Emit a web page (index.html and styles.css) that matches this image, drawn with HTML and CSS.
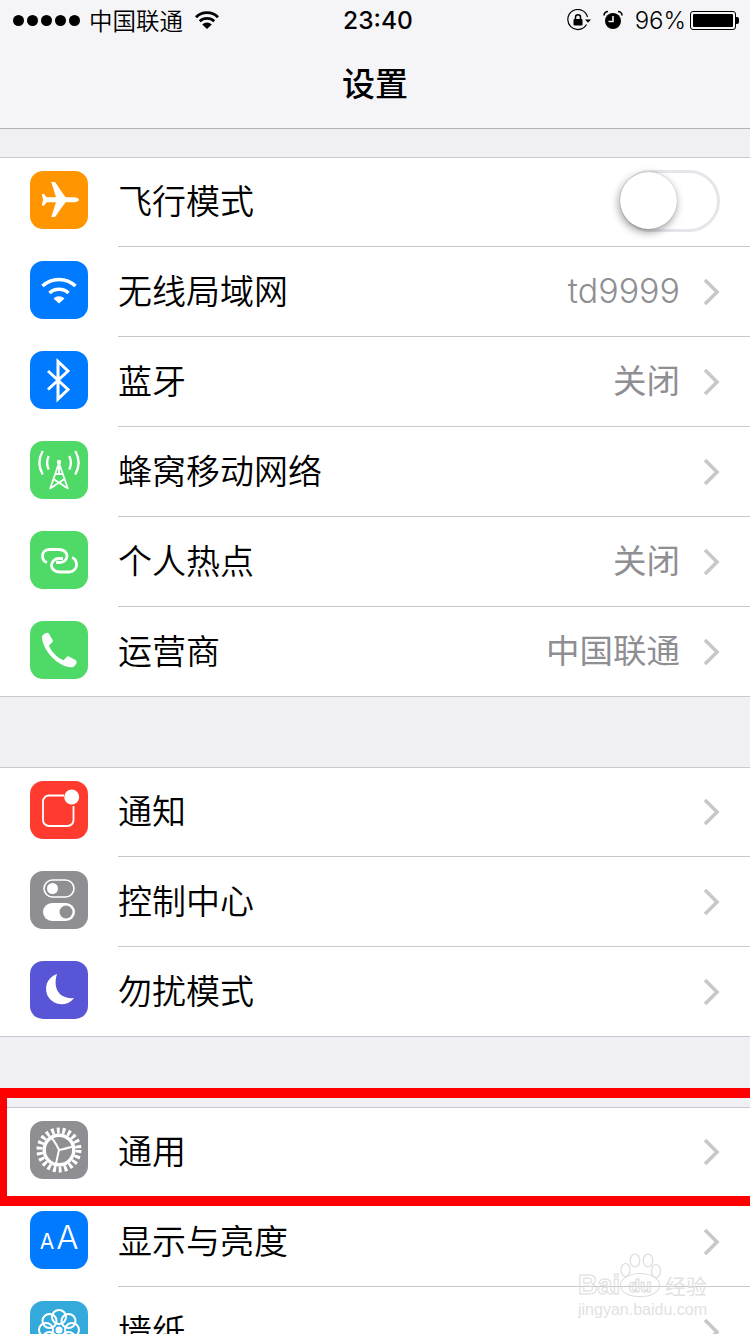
FILE: index.html
```html
<!DOCTYPE html>
<html lang="zh-CN">
<head>
    <meta charset="UTF-8">
    <meta name="viewport" content="width=device-width, initial-scale=1.0">
    <title>设置</title>
    <link rel="stylesheet" href="styles.css">
</head>
<body>
<div class="page">
    <!-- Status bar + title -->
    <header class="topbar">
        <div class="status">
            <div class="status-left">
                <div class="signal"><i></i><i></i><i></i><i></i><i></i></div>
                <span class="carrier">中国联通</span>
                <svg class="st-wifi" width="24" height="18" viewBox="0 0 24 18">
                    <path d="M1 6.200a15.500 15.500 0 0 1 22 0" fill="none" stroke="#000" stroke-width="2.800"/>
                    <path d="M4.800 10.200a10.500 10.500 0 0 1 14.400 0" fill="none" stroke="#000" stroke-width="2.800"/>
                    <path d="M12 18l-4.800-4.600a7 7 0 0 1 9.600 0z"/>
                </svg>
            </div>
            <div class="time">23:40</div>
            <div class="status-right">
                <svg class="st-lock" width="24" height="22" viewBox="0 0 24 22">
                    <path d="M20.500 8A10 10 0 1 0 19.500 15.500" fill="none" stroke="#000" stroke-width="1.200"/>
                    <path d="M18 10.500h6l-3 3.200z"/>
                    <rect x="6.500" y="10" width="9" height="6.500" rx="1"/>
                    <path d="M8.500 10V8.200a2.500 2.500 0 0 1 5 0V10" fill="none" stroke="#000" stroke-width="1.500"/>
                </svg>
                <svg class="st-alarm" width="20" height="20" viewBox="0 0 20 20">
                    <circle cx="10" cy="11" r="8"/>
                    <path d="M10 6v5.500H5.500" fill="none" stroke="#f5f5f7" stroke-width="1.600"/>
                    <path d="M1 5.500A4 4 0 0 1 5 1.500M19 5.500A4 4 0 0 0 15 1.500" fill="none" stroke="#000" stroke-width="1.600"/>
                </svg>
                <span class="battery-pct">96%</span>
                <div class="battery"><div class="battery-fill"></div></div>
                <div class="battery-tip"></div>
            </div>
        </div>
        <h1 class="title">设置</h1>
    </header>

    <!-- Group 1 -->
    <section class="group group-first">
        <div class="row">
            <div class="icon orange">
                <svg width="58" height="58" viewBox="0 0 58 58"><path fill="#fff" d="M49 28.700c0 1.500-2.500 2.500-5 2.500h-8.500L25 46h-3.700l4.700-14.800h-9.300l-3 3.600-1.900-.5 1.300-5.600-1.300-5.500 1.900-.5 3 3.600H26L21.300 11H25l10.500 15.200H44c2.500 0 5 1 5 2.500z"/></svg>
            </div>
            <span class="label">飞行模式</span>
            <div class="switch"><div class="knob"></div></div>
        </div>
        <div class="row">
            <div class="icon blue">
                <svg width="58" height="58" viewBox="0 0 58 58" fill="none" stroke="#fff" stroke-width="3.600">
                    <path d="M12.500 25a24 24 0 0 1 33 0"/>
                    <path d="M19.500 32a14 14 0 0 1 19 0"/>
                    <path fill="#fff" stroke="none" d="M29 42.500l-5.500-5a8 8 0 0 1 11 0z"/>
                </svg>
            </div>
            <span class="label">无线局域网</span>
            <span class="value value-latin">td9999</span>
            <svg class="chev" width="18" height="28" viewBox="0 0 18 28"><path d="M3 2l12 12L3 26" fill="none" stroke="#c7c7cc" stroke-width="3.600"/></svg>
        </div>
        <div class="row">
            <div class="icon blue">
                <svg width="58" height="58" viewBox="0 0 58 58"><path d="M18 20l20 18.500L28 48V10.500l10 9.500-20 18.500" fill="none" stroke="#fff" stroke-width="3"/></svg>
            </div>
            <span class="label">蓝牙</span>
            <span class="value">关闭</span>
            <svg class="chev" width="18" height="28" viewBox="0 0 18 28"><path d="M3 2l12 12L3 26" fill="none" stroke="#c7c7cc" stroke-width="3.600"/></svg>
        </div>
        <div class="row">
            <div class="icon green">
                <svg width="58" height="58" viewBox="0 0 58 58" fill="none" stroke="#fff" stroke-width="1.800">
                    <path d="M12.700 10a24 24 0 0 0 0 23.500M45.300 10a24 24 0 0 1 0 23.500" stroke-width="2.400"/>
                    <path d="M18.700 15a16 16 0 0 0 0 13.500M39.300 15a16 16 0 0 1 0 13.500" stroke-width="2.400"/>
                    <circle cx="29" cy="21" r="2.200" fill="#fff" stroke="none"/>
                    <path d="M29 22L20 48M29 22l9 26M29 22v11M25.500 33h7M23.500 38l13.500 9M34.500 38L21 47"/>
                </svg>
            </div>
            <span class="label">蜂窝移动网络</span>
            <svg class="chev" width="18" height="28" viewBox="0 0 18 28"><path d="M3 2l12 12L3 26" fill="none" stroke="#c7c7cc" stroke-width="3.600"/></svg>
        </div>
        <div class="row">
            <div class="icon green">
                <svg width="58" height="58" viewBox="0 0 58 58" fill="none" stroke="#fff" stroke-width="2.800">
                    <path d="M17 31.500C14 30.500 12.500 28 12.500 25 12.500 21 15.500 18.500 19.500 18.500H29C33.500 18.500 37 21.500 37 25 37 29 33.500 31.500 30 31.500H26"/>
                    <path d="M42 26.500C45 27.500 46.500 30.500 46.500 34 46.500 38 43 41 39 41H30C25 41 21.500 38 21.500 34.500 21.500 30.500 25 27.500 29 27.500H33"/>
                </svg>
            </div>
            <span class="label">个人热点</span>
            <span class="value">关闭</span>
            <svg class="chev" width="18" height="28" viewBox="0 0 18 28"><path d="M3 2l12 12L3 26" fill="none" stroke="#c7c7cc" stroke-width="3.600"/></svg>
        </div>
        <div class="row">
            <div class="icon green">
                <svg width="58" height="58" viewBox="0 0 58 58"><path fill="#fff" d="M12 16c0-1.500 3-4 5-4.200 1 0 1.600.5 2.200 1.400l3.300 5.600c.6 1.200.3 2.200-.6 3l-2.200 2c-.6.600-.7 1-.3 1.900 2.600 5.300 7.600 10.500 13 13 .9.400 1.400.3 2-.3l2-2.200c.9-.9 1.900-1.100 3-.5l6 3.400c.9.600 1.300 1.400 1.200 2.300-.3 2-2.700 4.600-4.500 4.800C30 47 12.500 30.500 12 16z"/></svg>
            </div>
            <span class="label">运营商</span>
            <span class="value">中国联通</span>
            <svg class="chev" width="18" height="28" viewBox="0 0 18 28"><path d="M3 2l12 12L3 26" fill="none" stroke="#c7c7cc" stroke-width="3.600"/></svg>
        </div>
    </section>

    <!-- Group 2 -->
    <section class="group">
        <div class="row">
            <div class="icon red">
                <svg width="58" height="58" viewBox="0 0 58 58">
                    <path d="M34 14.500H19a6 6 0 0 0-6 6V39a6 6 0 0 0 6 6h18.500a6 6 0 0 0 6-6V25" fill="none" stroke="#fff" stroke-width="1.800"/>
                    <circle cx="41.700" cy="16" r="7.500" fill="#fff"/>
                </svg>
            </div>
            <span class="label">通知</span>
            <svg class="chev" width="18" height="28" viewBox="0 0 18 28"><path d="M3 2l12 12L3 26" fill="none" stroke="#c7c7cc" stroke-width="3.600"/></svg>
        </div>
        <div class="row">
            <div class="icon gray">
                <svg width="58" height="58" viewBox="0 0 58 58">
                    <rect x="14" y="9" width="30" height="17" rx="8.500" fill="none" stroke="#fff" stroke-width="1.600"/>
                    <circle cx="22.500" cy="17.500" r="5.500" fill="#fff"/>
                    <rect x="13" y="32" width="32" height="18" rx="9" fill="#fff"/>
                    <circle cx="36" cy="41" r="6.500" fill="#8e8e93"/>
                </svg>
            </div>
            <span class="label">控制中心</span>
            <svg class="chev" width="18" height="28" viewBox="0 0 18 28"><path d="M3 2l12 12L3 26" fill="none" stroke="#c7c7cc" stroke-width="3.600"/></svg>
        </div>
        <div class="row">
            <div class="icon purple">
                <svg width="58" height="58" viewBox="0 0 58 58"><path fill="#fff" d="M27 13C24 22 26 30 31 34 34.500 36.500 39 37.500 44 37A15.500 15.500 0 1 1 27 13z"/></svg>
            </div>
            <span class="label">勿扰模式</span>
            <svg class="chev" width="18" height="28" viewBox="0 0 18 28"><path d="M3 2l12 12L3 26" fill="none" stroke="#c7c7cc" stroke-width="3.600"/></svg>
        </div>
    </section>

    <!-- Group 3 -->
    <section class="group">
        <div class="row">
            <div class="icon gray">
                <svg width="58" height="58" viewBox="0 0 58 58" fill="none" stroke="#fff">
                    <circle cx="29" cy="29" r="19.500" stroke-width="6" stroke-dasharray="2.900 2.670"/>
                    <circle cx="29" cy="29" r="14.800" stroke-width="3.400"/>
                    <path d="M29 29C27 25 25 20 21 16.500M29 29C33 28 39 27 44 25M29 29C28 33 27 38 26 43" stroke-width="2"/>
                </svg>
            </div>
            <span class="label">通用</span>
            <svg class="chev" width="18" height="28" viewBox="0 0 18 28"><path d="M3 2l12 12L3 26" fill="none" stroke="#c7c7cc" stroke-width="3.600"/></svg>
        </div>
        <div class="row">
            <div class="icon blue icon-aa"><span class="aa-small">A</span><span class="aa-big">A</span></div>
            <span class="label">显示与亮度</span>
            <svg class="chev" width="18" height="28" viewBox="0 0 18 28"><path d="M3 2l12 12L3 26" fill="none" stroke="#c7c7cc" stroke-width="3.600"/></svg>
        </div>
        <div class="row">
            <div class="icon cyan">
                <svg width="58" height="58" viewBox="0 0 58 58" fill="none" stroke="#fff" stroke-width="2">
                    <circle cx="29" cy="16" r="7"/><circle cx="19.500" cy="20" r="7"/><circle cx="38.500" cy="20" r="7"/>
                    <circle cx="16" cy="29" r="7"/><circle cx="42" cy="29" r="7"/>
                    <circle cx="19.500" cy="38" r="7"/><circle cx="38.500" cy="38" r="7"/><circle cx="29" cy="42" r="7"/>
                    <circle cx="29" cy="29" r="3.500" fill="#fff" stroke="none"/>
                </svg>
            </div>
            <span class="label">墙纸</span>
            <svg class="chev" width="18" height="28" viewBox="0 0 18 28"><path d="M3 2l12 12L3 26" fill="none" stroke="#c7c7cc" stroke-width="3.600"/></svg>
        </div>
    </section>

    <!-- Annotation and watermark, over the list -->
    <div class="red-box"></div>
    <div class="watermark">
        <svg class="paw" width="42" height="30" viewBox="0 0 42 30" fill="none" stroke="#dcdcdc" stroke-width="1.200">
            <ellipse cx="5.500" cy="17" rx="4.500" ry="6.500"/>
            <ellipse cx="15" cy="7.500" rx="4.800" ry="6.500"/>
            <ellipse cx="28" cy="7.500" rx="4.800" ry="6.500"/>
            <ellipse cx="36" cy="18" rx="4.500" ry="6.500"/>
        </svg>
        <div class="wm-main">
            <span class="wm-bai">Bai</span>
            <span class="wm-du">du</span>
            <span class="wm-cn">经验</span>
        </div>
        <div class="wm-sub">jingyan.baidu.com</div>
    </div>
</div>
</body>
</html>
```

FILE: styles.css
```css
html, body {
    margin: 0;
    padding: 0;
}
body {
    font-family: "Liberation Sans", "Noto Sans CJK SC", sans-serif;
    background-color: #efeff4;
    color: #000;
}
.page {
    position: relative;
    width: 750px;
    height: 1334px;
    overflow: hidden;
    background-color: #efeff4;
}

/* top bar */
.topbar {
    height: 128px;
    background-color: #f5f5f7;
    border-bottom: 1px solid #b2b2b2;
}
.status {
    display: flex;
    align-items: center;
    justify-content: space-between;
    height: 40px;
    padding: 0 11px 0 13px;
}
.status-left, .status-right {
    display: flex;
    align-items: center;
    width: 280px;
}
.status-right {
    justify-content: flex-end;
}
.signal {
    display: flex;
    gap: 3px;
}
.signal i {
    width: 11px;
    height: 11px;
    border-radius: 50%;
    background: #000;
}
.carrier {
    font-family: "Noto Sans CJK SC", sans-serif;
    font-size: 23.500px;
    font-weight: 350;
    line-height: 40px;
    margin-left: 9px;
}
.st-wifi {
    margin-left: 12px;
}
.time {
    font-family: "Inter", sans-serif;
    font-size: 24.500px;
    font-weight: 500;
    margin-left: 4px;
}
.st-alarm {
    margin-left: 12px;
}
.battery-pct {
    font-family: "Inter", sans-serif;
    font-size: 24px;
    font-weight: 300;
    margin-left: 12px;
    margin-right: 4px;
}
.battery {
    width: 46px;
    height: 19px;
    box-sizing: border-box;
    border: 1px solid #000;
    border-radius: 3px;
    padding: 2px;
}
.battery-fill {
    height: 100%;
    background: #000;
    border-radius: 1px;
}
.battery-tip {
    width: 3px;
    height: 7px;
    background: #000;
    border-radius: 0 2px 2px 0;
}
.title {
    margin: 0;
    text-align: center;
    font-family: "Noto Sans CJK SC", sans-serif;
    font-size: 33px;
    font-weight: 500;
    line-height: 48px;
    margin-top: 18px;
}

/* list */
.group {
    margin-top: 70px;
    background: #fff;
}
.group-first {
    margin-top: 28px;
}
.row {
    display: flex;
    align-items: center;
    height: 90px;
    box-sizing: border-box;
    padding: 0 30px 4px;
    position: relative;
}
.row::after {
    content: "";
    position: absolute;
    left: 118px;
    right: 0;
    bottom: 0;
    height: 1px;
    background: #c8c7cc;
}
.row:first-child {
    border-top: 1px solid #c8c7cc;
    padding-bottom: 5px;
}
.row:last-child::after {
    left: 0;
}
.icon {
    display: flex;
    align-items: center;
    justify-content: center;
    flex: none;
    width: 58px;
    height: 58px;
    border-radius: 13px;
}
.orange { background: #ff9500; }
.blue { background: #007aff; }
.green { background: #4fda68; }
.red { background: #ff3b30; }
.gray { background: #8e8e93; }
.purple { background: #5856d6; }
.cyan { background: #34aadc; }
.icon-aa {
    font-family: "Inter", sans-serif;
    color: #fff;
    align-items: baseline;
    gap: 2px;
    line-height: 52px;
}
.aa-small { font-size: 21px; }
.aa-big { font-size: 33px; font-weight: 300; }
.label {
    font-family: "Noto Sans CJK SC", sans-serif;
    font-size: 34px;
    font-weight: 350;
    line-height: 48px;
    margin-left: 30px;
    flex: 1;
}
.value {
    font-family: "Inter", "Noto Sans CJK SC", sans-serif;
    font-size: 33.500px;
    color: #8e8e93;
    margin: 0 21px 3px 0;
}
.value-latin {
    font-size: 34px;
    font-weight: 300;
    margin-bottom: 0;
}
.chev {
    flex: none;
    margin: 4px 0 0 1px;
}
.switch {
    width: 100px;
    height: 62px;
    box-sizing: border-box;
    border: 3px solid #e5e5ea;
    border-radius: 31px;
    position: relative;
    margin-top: 2px;
}
.knob {
    position: absolute;
    left: -3px;
    top: -1px;
    width: 57px;
    height: 57px;
    border-radius: 50%;
    background: #fff;
    box-shadow: -1px 3px 8px rgba(0,0,0,0.4), 0 0 1px rgba(0,0,0,0.3);
}

/* overlays */
.red-box {
    position: absolute;
    left: 0;
    right: -20px;
    top: 1088px;
    height: 98px;
    border: solid #ff0000;
    border-width: 10px 10px 10px 7px;
}
.watermark {
    position: absolute;
    left: 578px;
    top: 1253px;
    width: 136px;
    height: 66px;
}
.paw {
    position: absolute;
    left: 42px;
    top: 0;
}
.wm-main {
    position: absolute;
    left: 0;
    top: 18px;
    display: flex;
    align-items: center;
    white-space: nowrap;
    color: transparent;
    -webkit-text-stroke: 1px #dcdcdc;
}
.wm-bai {
    font-size: 27px;
    font-weight: bold;
    line-height: 28px;
}
.wm-du {
    box-sizing: border-box;
    width: 40px;
    height: 24px;
    border: 1px solid #dcdcdc;
    border-radius: 50% 50% 46% 46%;
    text-align: center;
    font-size: 19px;
    font-weight: bold;
    line-height: 24px;
}
.wm-cn {
    font-family: "Noto Sans CJK SC", sans-serif;
    font-size: 21px;
    line-height: 28px;
    margin-left: 5px;
    color: #e2e2e2;
    -webkit-text-stroke: 0;
}
.wm-sub {
    position: absolute;
    left: 0;
    top: 47px;
    font-size: 16px;
    line-height: 20px;
    white-space: nowrap;
    color: #e2e2e2;
}
```
